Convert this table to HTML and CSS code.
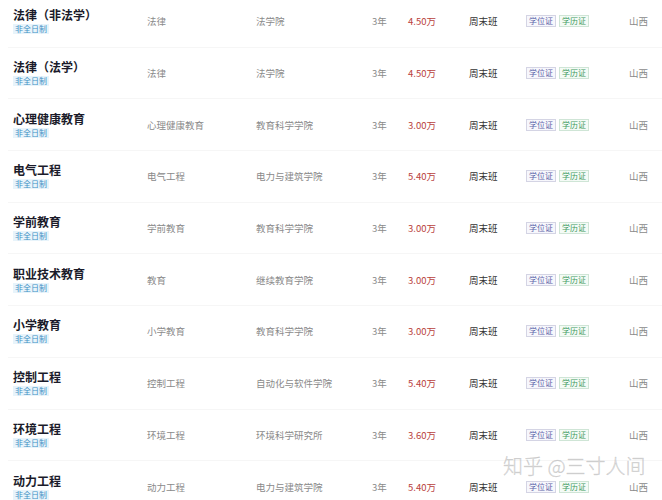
FILE: index.html
```html
<!DOCTYPE html>
<html lang="zh">
<head>
<meta charset="utf-8">
<link rel="stylesheet" href="styles.css">
</head>
<body>
<div class="table">
  <div class="row">
    <div class="name"><div class="title">法律（非法学）</div><span class="tag">非全日制</span></div>
    <div class="cell">法律</div><div class="cell">法学院</div><div class="cell">3年</div><div class="cell fee">4.50万</div><div class="cell mode">周末班</div>
    <div class="certs"><span class="cert deg">学位证</span><span class="cert dip">学历证</span></div><div class="cell">山西</div>
  </div>
  <div class="row">
    <div class="name"><div class="title">法律（法学）</div><span class="tag">非全日制</span></div>
    <div class="cell">法律</div><div class="cell">法学院</div><div class="cell">3年</div><div class="cell fee">4.50万</div><div class="cell mode">周末班</div>
    <div class="certs"><span class="cert deg">学位证</span><span class="cert dip">学历证</span></div><div class="cell">山西</div>
  </div>
  <div class="row">
    <div class="name"><div class="title">心理健康教育</div><span class="tag">非全日制</span></div>
    <div class="cell">心理健康教育</div><div class="cell">教育科学学院</div><div class="cell">3年</div><div class="cell fee">3.00万</div><div class="cell mode">周末班</div>
    <div class="certs"><span class="cert deg">学位证</span><span class="cert dip">学历证</span></div><div class="cell">山西</div>
  </div>
  <div class="row">
    <div class="name"><div class="title">电气工程</div><span class="tag">非全日制</span></div>
    <div class="cell">电气工程</div><div class="cell">电力与建筑学院</div><div class="cell">3年</div><div class="cell fee">5.40万</div><div class="cell mode">周末班</div>
    <div class="certs"><span class="cert deg">学位证</span><span class="cert dip">学历证</span></div><div class="cell">山西</div>
  </div>
  <div class="row">
    <div class="name"><div class="title">学前教育</div><span class="tag">非全日制</span></div>
    <div class="cell">学前教育</div><div class="cell">教育科学学院</div><div class="cell">3年</div><div class="cell fee">3.00万</div><div class="cell mode">周末班</div>
    <div class="certs"><span class="cert deg">学位证</span><span class="cert dip">学历证</span></div><div class="cell">山西</div>
  </div>
  <div class="row">
    <div class="name"><div class="title">职业技术教育</div><span class="tag">非全日制</span></div>
    <div class="cell">教育</div><div class="cell">继续教育学院</div><div class="cell">3年</div><div class="cell fee">3.00万</div><div class="cell mode">周末班</div>
    <div class="certs"><span class="cert deg">学位证</span><span class="cert dip">学历证</span></div><div class="cell">山西</div>
  </div>
  <div class="row">
    <div class="name"><div class="title">小学教育</div><span class="tag">非全日制</span></div>
    <div class="cell">小学教育</div><div class="cell">教育科学学院</div><div class="cell">3年</div><div class="cell fee">3.00万</div><div class="cell mode">周末班</div>
    <div class="certs"><span class="cert deg">学位证</span><span class="cert dip">学历证</span></div><div class="cell">山西</div>
  </div>
  <div class="row">
    <div class="name"><div class="title">控制工程</div><span class="tag">非全日制</span></div>
    <div class="cell">控制工程</div><div class="cell">自动化与软件学院</div><div class="cell">3年</div><div class="cell fee">5.40万</div><div class="cell mode">周末班</div>
    <div class="certs"><span class="cert deg">学位证</span><span class="cert dip">学历证</span></div><div class="cell">山西</div>
  </div>
  <div class="row">
    <div class="name"><div class="title">环境工程</div><span class="tag">非全日制</span></div>
    <div class="cell">环境工程</div><div class="cell">环境科学研究所</div><div class="cell">3年</div><div class="cell fee">3.60万</div><div class="cell mode">周末班</div>
    <div class="certs"><span class="cert deg">学位证</span><span class="cert dip">学历证</span></div><div class="cell">山西</div>
  </div>
  <div class="row">
    <div class="name"><div class="title">动力工程</div><span class="tag">非全日制</span></div>
    <div class="cell">动力工程</div><div class="cell">电力与建筑学院</div><div class="cell">3年</div><div class="cell fee">5.40万</div><div class="cell mode">周末班</div>
    <div class="certs"><span class="cert deg">学位证</span><span class="cert dip">学历证</span></div><div class="cell">山西</div>
  </div>
</div>
<div class="watermark">知乎 @三寸人间</div>
</body>
</html>
```

FILE: styles.css
```css
html, body {
  margin: 0;
  padding: 0;
  background: #fff;
  overflow: hidden;
  height: 500px;
}
body {
  font-family: "Noto Sans CJK SC", "Noto Sans", sans-serif;
  position: relative;
}
.table {
  margin-top: -4px;
}
.row {
  display: grid;
  grid-template-columns: 134px 109px 116px 36px 61px 57px 103px 1fr;
  align-items: center;
  height: 51.7px;
  box-sizing: border-box;
  padding-left: 5px;
  margin-left: 8px;
  border-bottom: 1px solid #f6f6f6;
}
.name {
  display: flex;
  flex-direction: column;
  align-items: flex-start;
  gap: 2px;
}
.title {
  font-size: 12px;
  font-weight: 700;
  color: #1b1b2a;
  line-height: 14px;
}
.tag {
  font-size: 8px;
  line-height: 10px;
  padding: 0 2px;
  background: #e8f4fb;
  color: #3d8fc4;
}
.cell {
  font-size: 9.5px;
  color: #8a8a8a;
  line-height: 12px;
}
.fee {
  color: #b9413c;
}
.mode {
  color: #333;
}
.certs {
  display: flex;
  gap: 3px;
}
.cert {
  font-size: 8px;
  line-height: 10px;
  padding: 0 2px;
  border: 1px solid #d4d4e4;
}
.deg {
  color: #5a62a8;
  background: #f7f7fc;
}
.dip {
  color: #3f9a5f;
  border-color: #cfe5d6;
  background: #f4fbf6;
}
.watermark {
  position: absolute;
  left: 503px;
  top: 453px;
  font-size: 20px;
  line-height: 26px;
  color: rgba(200, 200, 200, 0.6);
  -webkit-text-stroke: 0.4px rgba(150, 150, 150, 0.4);
  font-weight: 300;
  white-space: nowrap;
}
```
